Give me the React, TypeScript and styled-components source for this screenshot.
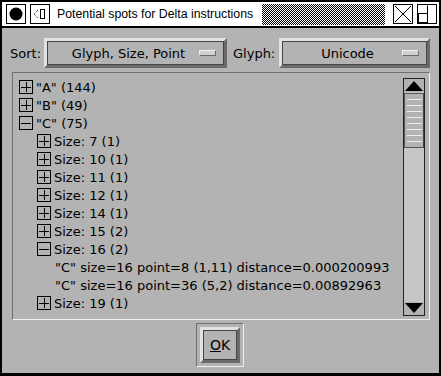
import React, {FC} from "react";
import styled, {createGlobalStyle} from "styled-components";

const Global = createGlobalStyle`
html, body {margin: 0; padding: 0; background: #b3b3b3;}
* {box-sizing: border-box;}
`;

const Window = styled.div`
width: 441px;
height: 376px;
border: 2px solid #000;
border-bottom-width: 3px;
background: #b3b3b3;
display: flex;
flex-direction: column;
font-family: "DejaVu Sans", sans-serif;
font-size: 13px;
color: #000;
`;

const TitleBar = styled.div`
height: 26px;
background: #fff;
border-bottom: 2px solid #000;
display: flex;
align-items: center;
padding: 0 2px 0 2px;
`;
const TitleBox = styled.div<{gap?: number}>`
width: 20px;
height: 20px;
border: 1px solid #000;
margin-left: ${p => p.gap ?? 4}px;
display: flex;
align-items: center;
justify-content: center;
flex-shrink: 0;
`;
const TitleText = styled.div`
font-family: "Liberation Sans", Arial, sans-serif;
font-size: 12.3px;
margin-left: 7px;
white-space: nowrap;
`;
const Stipple = styled.div`
flex: 1;
height: 21px;
margin: 0 8px 0 9px;
background: repeating-conic-gradient(#000 0 25%, #fff 0 50%) 0 0 / 2px 2px;
`;

const Body = styled.div`
flex: 1;
display: flex;
flex-direction: column;
padding: 10px 9px 0 8px;
`;
const SortRow = styled.div`
display: flex;
align-items: center;
height: 30px;
`;
const Label = styled.span<{ml?: number}>`
margin-left: ${p => p.ml ?? 0}px;
width: ${p => p.ml ? 46 : 34}px;
`;
const DropButton = styled.div<{w: number}>`
width: ${p => p.w}px;
height: 30px;
border: 3px solid;
border-color: #e2e2e2 #6a6a6a #6a6a6a #e2e2e2;
`;
const DropFace = styled.div`
height: 100%;
border: 1px solid #444;
display: flex;
align-items: center;
padding: 0 7px 0 10px;
`;
const DropText = styled.span`
flex: 1;
text-align: center;
`;
const Indicator = styled.span`
width: 17px;
height: 6px;
border: 1px solid;
border-color: #f0f0f0 #6a6a6a #6a6a6a #f0f0f0;
background: #d0d0d0;
`;

const ListBox = styled.div`
margin-top: 4px;
margin-left: 2px;
height: 248px;
border: 1px solid;
border-color: #707070 #f0f0f0 #f0f0f0 #707070;
display: flex;
padding: 5px 4px 3px 6px;
`;
const Tree = styled.div`
flex: 1;
`;
const Row = styled.div<{level: number}>`
height: 18px;
display: flex;
align-items: center;
padding-left: ${p => p.level * 18}px;
white-space: nowrap;
`;
const Expander = styled.svg`
width: 14px;
height: 14px;
margin-right: 3px;
flex-shrink: 0;
`;
const Leaf = styled.span`
padding-left: 18px;
`;

const ScrollBar = styled.div`
width: 22px;
display: flex;
flex-direction: column;
border: 1px solid #222;
background: #c6c6c6;
`;
const Arrow = styled.div`
height: 13px;
background: #b3b3b3;
display: flex;
align-items: center;
justify-content: center;
`;
const Thumb = styled.div`
height: 55px;
margin-top: 1px;
border: 1px solid #555;
border-right-color: #444;
background: #b3b3b3;
display: flex;
flex-direction: column;
align-items: center;
padding-top: 5px;
gap: 5px;
`;
const Grip = styled.div`
width: 15px;
height: 1px;
background: #eeeeee;
`;
const Trough = styled.div`
flex: 1;
`;

const Footer = styled.div`
display: flex;
justify-content: center;
padding-top: 3px;
`;
const DefaultFrame = styled.div`
width: 48px;
height: 44px;
border: 1px solid;
border-color: #707070 #f0f0f0 #f0f0f0 #707070;
padding: 3px;
`;
const OkButton = styled.div`
height: 100%;
border: 3px solid;
border-color: #e2e2e2 #6a6a6a #6a6a6a #e2e2e2;
`;
const OkFace = styled.div`
height: 100%;
border: 1px solid #444;
display: flex;
align-items: center;
justify-content: center;
font-size: 14px;
`;

const Box: FC<{open?: boolean}> = ({open}) => (
    <Expander viewBox="0 0 14 14">
        <rect x="0.5" y="0.5" width="13" height="13" fill="none" stroke="#000"/>
        <line x1="2" y1="7.5" x2="12" y2="7.5" stroke="#000"/>
        {!open && <line x1="7.5" y1="2" x2="7.5" y2="12" stroke="#000"/>}
    </Expander>
);

type Item = {level: number, text: string, open?: boolean, leaf?: boolean};
const items: Item[] = [
    {level: 0, text: '"A" (144)'},
    {level: 0, text: '"B" (49)'},
    {level: 0, text: '"C" (75)', open: true},
    {level: 1, text: 'Size: 7 (1)'},
    {level: 1, text: 'Size: 10 (1)'},
    {level: 1, text: 'Size: 11 (1)'},
    {level: 1, text: 'Size: 12 (1)'},
    {level: 1, text: 'Size: 14 (1)'},
    {level: 1, text: 'Size: 15 (2)'},
    {level: 1, text: 'Size: 16 (2)', open: true},
    {level: 1, text: '"C" size=16 point=8 (1,11) distance=0.000200993', leaf: true},
    {level: 1, text: '"C" size=16 point=36 (5,2) distance=0.00892963', leaf: true},
    {level: 1, text: 'Size: 19 (1)'},
];

const App: FC = () => {
    return <>
        <Global/>
        <Window>
            <TitleBar>
                <TitleBox gap={2}>
                    <svg width="14" height="14"><circle cx="7" cy="7" r="6.5" fill="#000"/></svg>
                </TitleBox>
                <TitleBox>
                    <svg width="18" height="18" viewBox="0 0 18 18">
                        <path d="M7 5 L3 9 L7 13" fill="none" stroke="#000" strokeDasharray="1 1"/>
                        <rect x="9.5" y="4.5" width="4" height="9" fill="none" stroke="#000"/>
                    </svg>
                </TitleBox>
                <TitleText>Potential spots for Delta instructions</TitleText>
                <Stipple/>
                <TitleBox gap={0}>
                    <svg width="18" height="18"><path d="M1 1 L17 17 M17 1 L1 17" stroke="#000"/></svg>
                </TitleBox>
                <TitleBox gap={4}>
                    <svg width="18" height="18"><path d="M0.5 8.5 H9.5 V0.5 M0.5 17.5" fill="none" stroke="#000"/><rect x="0.5" y="8.5" width="9" height="9" fill="none" stroke="#000"/></svg>
                </TitleBox>
            </TitleBar>
            <Body>
                <SortRow>
                    <Label>Sort:</Label>
                    <DropButton w={183}>
                        <DropFace><DropText>Glyph, Size, Point</DropText><Indicator/></DropFace>
                    </DropButton>
                    <Label ml={6}>Glyph:</Label>
                    <DropButton w={151}>
                        <DropFace><DropText>Unicode</DropText><Indicator/></DropFace>
                    </DropButton>
                </SortRow>
                <ListBox>
                    <Tree>
                        {items.map((it, i) =>
                            <Row key={i} level={it.level}>
                                {it.leaf ? <Leaf>{it.text}</Leaf> : <><Box open={it.open}/>{it.text}</>}
                            </Row>
                        )}
                    </Tree>
                    <ScrollBar>
                        <Arrow>
                            <svg width="20" height="11"><path d="M10 1 L19 11 L1 11 Z" fill="#000"/></svg>
                        </Arrow>
                        <Thumb>
                            {[0, 1, 2, 3, 4, 5, 6, 7].map(i => <Grip key={i}/>)}
                        </Thumb>
                        <Trough/>
                        <Arrow>
                            <svg width="20" height="11"><path d="M1 0 L19 0 L10 10 Z" fill="#000"/></svg>
                        </Arrow>
                    </ScrollBar>
                </ListBox>
                <Footer>
                    <DefaultFrame>
                        <OkButton>
                            <OkFace><span><u>O</u>K</span></OkFace>
                        </OkButton>
                    </DefaultFrame>
                </Footer>
            </Body>
        </Window>
    </>;
};
export default App;
